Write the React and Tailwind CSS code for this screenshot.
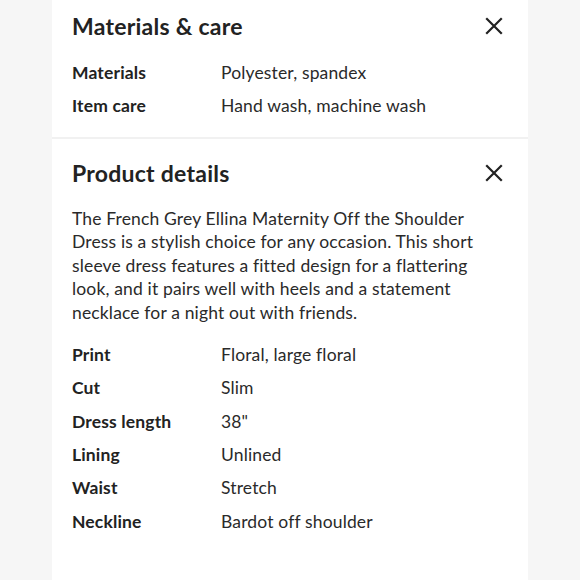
import React from "react";

function CloseIcon() {
  return (
    <svg width="18" height="18" viewBox="0 0 18 18" className="block">
      <path d="M2 2 L16 16 M16 2 L2 16" stroke="#222" strokeWidth="2.2" strokeLinecap="square" fill="none" />
    </svg>
  );
}

function SectionHead({ title }) {
  return (
    <div className="flex items-center justify-between h-[30px]">
      <h2 className="text-[23px] tracking-[0.25px] font-bold text-[#222] leading-[30px]">{title}</h2>
      <button className="mr-[5px]">
        <CloseIcon />
      </button>
    </div>
  );
}

function Row({ label, value }) {
  return (
    <div className="flex h-[33.4px] items-center text-[17.5px] tracking-[0.15px]">
      <div className="w-[149px] font-bold text-[#222]">{label}</div>
      <div className="text-[#2a2a2a]">{value}</div>
    </div>
  );
}

const details = [
  ["Print", "Floral, large floral"],
  ["Cut", "Slim"],
  ["Dress length", "38\""],
  ["Lining", "Unlined"],
  ["Waist", "Stretch"],
  ["Neckline", "Bardot off shoulder"],
];

export default function App() {
  return (
    <div
      className="min-h-[580px] w-[580px] bg-[#f6f6f6] flex"
      style={{ fontFamily: "Lato, 'Noto Sans', sans-serif" }}
    >
      <div className="ml-[52px] w-[476px] bg-white">
        {/* materials */}
        <div className="px-5 pt-[11px] pb-[14px] border-b-2 border-[#f1f1f1]">
          <SectionHead title="Materials & care" />
          <div className="mt-[15px]">
            <Row label="Materials" value="Polyester, spandex" />
            <Row label="Item care" value="Hand wash, machine wash" />
          </div>
        </div>

        {/* product details */}
        <div className="px-5 pt-[19px] pb-10">
          <SectionHead title="Product details" />
          <p className="mt-[19px] text-[17.5px] tracking-[0.15px] leading-[23.5px] text-[#2a2a2a] pr-6">
            The French Grey Ellina Maternity Off the Shoulder Dress is a stylish choice for any occasion. This short sleeve dress features a fitted design for a flattering look, and it pairs well with heels and a statement necklace for a night out with friends.
          </p>
          <div className="mt-[14px]">
            {details.map(([l, v]) => (
              <Row key={l} label={l} value={v} />
            ))}
          </div>
        </div>
      </div>
    </div>
  );
}
